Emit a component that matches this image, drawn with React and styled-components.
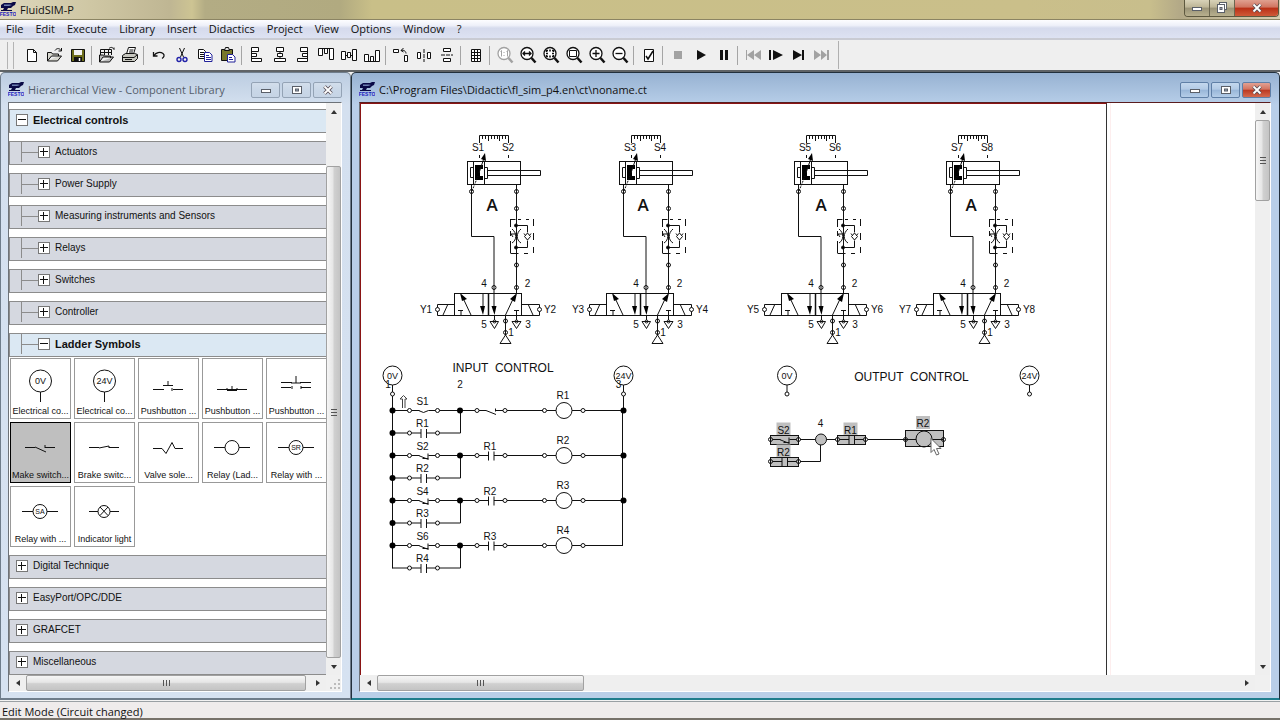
import React from "react";
import styled, { createGlobalStyle, css } from "styled-components";

const uiFont = `"Open Sans", "Noto Sans", sans-serif`;
const libFont = `"Liberation Sans", Arial, sans-serif`;

const GlobalStyle = createGlobalStyle`
  * { box-sizing: border-box; }
  body { margin: 0; background: #eeecec; color: #111; font: 11px/16px ${uiFont}; overflow: hidden; }
  button { font: inherit; color: inherit; padding: 0; margin: 0; border: 0; background: none; }
  svg { display: block; flex: none; }
`;

/* ---------- application frame ---------- */

const Shell = styled.div`
  display: flex;
  flex-direction: column;
  height: 100vh;
`;

const TitleBar = styled.header`
  display: flex;
  justify-content: space-between;
  height: 20px;
  border-bottom: 1px solid #8b8463;
  background: linear-gradient(90deg, #ddd7bd 0, #cfc7a4 90px, #bfb693 170px, #cdc493 192px, #b3ac84 205px, #b1aa80 340px, #c9bf88 372px, #cabf8a 80%, #c8be8c 1150px, #b3a987 1180px, #d6cdb0 100%);
`;

const Brand = styled.h1`
  display: flex;
  align-items: center;
  gap: 4px;
  margin: 0;
  font-size: 11px;
  font-weight: 400;
  line-height: 20px;
`;

const CaptionButtons = styled.div`
  display: flex;
  height: 17px;
  margin-right: 1px;
  border: 1px solid #5d583f;
  border-top: 0;
  border-radius: 0 0 4px 4px;
  overflow: hidden;
`;

const CaptionButton = styled.button`
  display: grid;
  place-items: center;
  width: ${(p) => (p.$close ? 43 : 25)}px;
  border-right: ${(p) => (p.$close ? 0 : 1)}px solid #6b6650;
  background: ${(p) =>
    p.$close
      ? "linear-gradient(#e0a090 0, #d07460 45%, #b92f16 50%, #cf5a38 100%)"
      : "linear-gradient(#d8d2b8 0, #bdb596 45%, #9a9377 50%, #b8b08e 100%)"};
`;

const MenuBar = styled.nav`
  display: flex;
  align-items: center;
  gap: 12px;
  height: 20px;
  padding: 0 6px;
  border-bottom: 2px solid #c9cbd3;
  background: linear-gradient(#fdfdff 0, #eef0f9 30%, #d5daec 45%, #dde2f2 100%);
`;

const MenuItem = styled.button`
  font-size: 11px;
  line-height: 16px;
`;

const Toolbar = styled.div`
  display: flex;
  align-items: center;
  height: 32px;
  padding-left: 7px;
  border-bottom: 2px solid #5f6366;
  background: #efefef;
`;

const Grip = styled.span`
  width: 7px;
  height: 27px;
  margin-right: 6px;
  border: solid #b4b4b4;
  border-width: 0 1px;
`;

const ToolGroup = styled.div`
  display: flex;
  align-items: center;
  & + &::before {
    content: "";
    width: 1px;
    height: 19px;
    margin: 0 3px 0 2px;
    background: #a5a5a5;
  }
`;

const ToolButton = styled.button`
  display: grid;
  place-items: center;
  width: 23px;
  height: 24px;
  color: ${(p) => (p.disabled ? "#a2a2a2" : "#111")};
`;

const ToolEnd = styled.span`
  width: 1px;
  height: 28px;
  margin-left: 5px;
  background: #b0b0b0;
`;

const StatusBar = styled.footer`
  height: 19px;
  padding: 2px 2px 0;
  border-top: 1px solid #9aa0a4;
  border-bottom: 2px solid #77726a;
  background: #efecec;
  line-height: 16px;
`;

/* ---------- child windows ---------- */

const Desktop = styled.main`
  display: flex;
  flex: 1;
  min-height: 0;
  background: #f3f3f3;
  padding-bottom: 1px;
`;

const frameActive = css`
  flex: 1;
  min-width: 0;
  border-color: #22303c;
  border-bottom-color: #1f7d8c;
  background: linear-gradient(#97b2d2 0, #b8cfe9 32px, #b8cfe9 110px, #b9cfe8 100%);
  color: #111;
`;

const frameInactive = css`
  width: 351px;
  flex: none;
  border-color: #6f7d8b;
  background: linear-gradient(#bccde1 0, #d4e0ef 32px, #d6e2f1 100%);
  color: #56606c;
`;

const Window = styled.section`
  display: flex;
  flex-direction: column;
  padding: 0 8px 6px 7px;
  border: solid;
  border-width: 1px 1px 2px;
  border-radius: 5px 5px 0 0;
  ${(p) => (p.$active ? frameActive : frameInactive)}
`;

const WindowTitle = styled.div`
  display: flex;
  align-items: center;
  height: 29px;
  padding-top: 4px;
  gap: 4px;
`;

const WindowName = styled.h2`
  flex: 1;
  margin: 0;
  font-size: 11px;
  font-weight: 400;
  line-height: 20px;
`;

const WindowButtons = styled.div`
  display: flex;
  gap: 2px;
`;

const WindowButton = styled.button`
  display: grid;
  place-items: center;
  width: 29px;
  height: 16px;
  border: 1px solid ${(p) => (p.$active ? "#5f7fa6" : "#94a3b5")};
  border-radius: 2px;
  background: ${(p) =>
    p.$close && p.$active
      ? "linear-gradient(#e2a193 0, #d3735f 45%, #bb3820 50%, #d4694d 100%)"
      : p.$active
        ? "linear-gradient(#c4d8ee 0, #b2cae5 45%, #98b6d8 50%, #b4cde8 100%)"
        : "linear-gradient(#d3deeb 0, #c9d7e7 50%, #c6d4e5 100%)"};
`;

const Client = styled.div`
  display: grid;
  grid-template: minmax(0, 1fr) 16px / minmax(0, 1fr) 15px;
  flex: 1;
  min-height: 0;
  border: 1px solid #fff;
  border-top-color: ${(p) => (p.$active ? "#5a1c1e" : "#6d7278")};
  border-left-color: #6d7278;
  background: #f0f0f0;
`;

/* ---------- scroll bars ---------- */

const Track = styled.div`
  display: flex;
  flex-direction: ${(p) => (p.$vertical ? "column" : "row")};
  background: #efefef;
`;

const ArrowButton = styled.button`
  display: grid;
  place-items: center;
  flex: none;
  width: ${(p) => (p.$vertical ? "auto" : "17px")};
  height: ${(p) => (p.$vertical ? "17px" : "auto")};
`;

const Travel = styled.div`
  display: flex;
  flex: 1;
  flex-direction: inherit;
  padding-top: ${(p) => p.$lead}px;
`;

const Thumb = styled.div`
  display: grid;
  place-items: center;
  flex: 0 0 ${(p) => p.$size};
  border: 1px solid #a1a1a1;
  border-radius: 2px;
  background: linear-gradient(${(p) => (p.$vertical ? "90deg" : "180deg")}, #f6f6f6 0, #e6e6e6 45%, #d0d0d0 55%, #c4c4c4 100%);
`;

/* ---------- component library ---------- */

const Tree = styled.div`
  display: flex;
  flex-direction: column;
  gap: 8px;
  padding-top: 6px;
  overflow: hidden;
  background: #fff;
  font-family: ${libFont};
  color: #111;
`;

const Branch = styled.button`
  display: flex;
  align-items: center;
  flex: none;
  height: 24px;
  padding-left: ${(p) => (p.$nested ? 11 : 6)}px;
  padding-bottom: 2px;
  border: solid #8c8c8c;
  border-width: 1px 0 1px 1px;
  background: ${(p) => (p.$open ? "#dbe8f3" : "#d5d8e0")};
  font-size: ${(p) => (p.$open ? 11 : 10)}px;
  font-weight: ${(p) => (p.$open ? 700 : 400)};
  text-align: left;
`;

const Elbow = styled.span`
  align-self: stretch;
  width: 17px;
  border-left: 1px solid #8c8c8c;
  background: linear-gradient(#8c8c8c, #8c8c8c) 0 10px / 17px 1px no-repeat;
`;

const Expander = styled.span`
  display: grid;
  place-items: center;
  width: 12px;
  height: 12px;
  margin-right: 5px;
  border: 1px solid #777;
  background: #fff;
`;

const OpenBranch = styled.div`
  display: flex;
  flex-direction: column;
  gap: 1px;
  flex: none;
`;

const Palette = styled.div`
  display: grid;
  grid-template-columns: repeat(5, 61px);
  gap: 3px;
  padding-left: 1px;
`;

const Tile = styled.button`
  display: flex;
  flex-direction: column;
  justify-content: space-between;
  align-items: center;
  height: 61px;
  padding-bottom: 1px;
  border: ${(p) => (p.$selected ? "1px solid #000" : "1px solid #999")};
  background: ${(p) => (p.$selected ? "#bfbfbf" : "#fff")};
  font-size: 9px;
  line-height: 12px;
  white-space: nowrap;
  overflow: hidden;
`;

/* ---------- circuit canvas ---------- */

const Canvas = styled.div`
  overflow: hidden;
  background: #fff;
`;

const Paper = styled.div`
  width: 747px;
  min-height: 100%;
  border: 1px solid #333;
  border-top-color: #8a1414;
  border-left-color: #8a1414;
  border-bottom: 0;
  box-shadow: 3px 0 0 #fff, 4px 0 0 #fdeeee;
`;

const Sheet = styled.svg`
  overflow: visible;
  font-family: ${libFont};
  font-size: 10px;
  fill: none;
  stroke: #111;
  text {
    fill: #111;
    stroke: none;
    text-anchor: middle;
    white-space: pre;
  }
`;

/* ---------- small glyphs ---------- */

const FestoLogo = () => (
  <svg width="16" height="15" viewBox="0 0 16 15" aria-hidden="true">
    <path d="M1 3l3-2h7l2-1h3l-1 3-2 1-2 2H8L7 8H3l1-2H1z" fill="#0a0a46" />
    <path d="M4 2.500h6l2 .5-3 1H4z" fill="#6d7fb0" />
    <path d="M1 8.500h11" stroke="#0a0a46" />
    <text x="8" y="14" textAnchor="middle" fontSize="5" fontWeight="700" fill="#1c1cc0" fontFamily="Liberation Sans">FESTO</text>
  </svg>
);

const MinGlyph = () => (
  <svg width="12" height="10" viewBox="0 0 12 10"><rect x="1.500" y="4.500" width="9" height="3" fill="#fff" stroke="#5a5f68" /></svg>
);
const MaxGlyph = () => (
  <svg width="12" height="10" viewBox="0 0 12 10"><rect x="1.500" y="1.500" width="9" height="7" fill="#fff" stroke="#5a5f68" /><rect x="4.500" y="4" width="3" height="2" fill="#9ab" stroke="#5a5f68" /></svg>
);
const RestoreGlyph = () => (
  <svg width="12" height="12" viewBox="0 0 12 12" fill="#fff" stroke="#5a5f68"><rect x="3.500" y=".5" width="7" height="7" /><rect x="1.500" y="2.500" width="7" height="8" /><rect x="4" y="5.500" width="2" height="2" fill="#889" /></svg>
);
const CloseGlyph = () => (
  <svg width="12" height="10" viewBox="0 0 12 10" fill="none"><path d="M2.500 1.500l7 7M9.500 1.500l-7 7" stroke="#5a5058" strokeWidth="3.600" /><path d="M2.500 1.500l7 7M9.500 1.500l-7 7" stroke="#fff" strokeWidth="1.800" /></svg>
);

const triangles = {
  up: "M1 6L4 2L7 6z",
  down: "M1 2L4 6L7 2z",
  left: "M6 1L2 4L6 7z",
  right: "M2 1L6 4L2 7z",
};
const Triangle = ({ dir }) => (
  <svg width="8" height="8" viewBox="0 0 8 8"><path d={triangles[dir]} fill="#333" /></svg>
);

const GripLines = ({ vertical }) => (
  <svg width="8" height="8" viewBox="0 0 8 8"><path d={vertical ? "M1 1.500h6M1 4.500h6M1 7.500h6" : "M1.500 1v6M4.500 1v6M7.500 1v6"} stroke="#555" /></svg>
);

function ScrollBar({ vertical, lead = 0, size }) {
  return (
    <Track $vertical={vertical}>
      <ArrowButton $vertical={vertical} aria-label={vertical ? "Scroll up" : "Scroll left"}><Triangle dir={vertical ? "up" : "left"} /></ArrowButton>
      <Travel $lead={lead}>
        <Thumb $vertical={vertical} $size={size}><GripLines vertical={vertical} /></Thumb>
      </Travel>
      <ArrowButton $vertical={vertical} aria-label={vertical ? "Scroll down" : "Scroll right"}><Triangle dir={vertical ? "down" : "right"} /></ArrowButton>
    </Track>
  );
}

/* ---------- toolbar icons ---------- */

const Lens = ({ children }) => (
  <>
    <circle cx="8" cy="7.500" r="6" fill="#fff" strokeWidth="1.300" />
    <path d="M12.500 12l4 4.500" strokeWidth="2.500" />
    {children}
  </>
);

const openFolder = "M1.500 15V6.500h4l1 1.500h6v2M1.500 15h10l4-5H5.500z";

const icons = {
  New: <path d="M4.500 3.500h6l3 3v9h-9zM10.500 3.500v3h3" fill="#fff" />,
  Open: <><path d={openFolder} fill="#d8d8d0" /><path d="M9 4.500c2-3 5-2 6 0M15.500 2v3h-3" /></>,
  Save: <><path d="M2.500 3.500h13v12h-13z" fill="#6d6d1a" /><path d="M5 4h8v5H5z" fill="#f2f2f2" stroke="none" /><path d="M5 11h8v5H5z" fill="#111" stroke="none" /><path d="M10.500 12v3" stroke="#fff" strokeWidth="1.500" /></>,
  "Open preview": <><path d="M2.500 10V3.500h11V9M2 6.500h12M6.500 3v6M10.500 3v6" fill="none" /><path d="M1.500 16V9h4l1 1h6v2M1.500 16h10l4-5H5z" fill="#bbb" /><path d="M11 2.500c2-2 4-1 5 1v-2" /></>,
  Print: <><path d="M5.500 8l2-6.500h7l-2 6.500" fill="#fff" /><path d="M8.500 4h4M8 6h4" /><path d="M1.500 9.500l3-2h9l3 1v4l-3 3h-12z" fill="#c8c8c0" /><path d="M2 11.500h11l3-2.500M4 13.500h7" /></>,
  Undo: <path d="M3.500 6v4h4M4 9.500c2-3 6-4 9-2 2 1.500 1 4-1 5" strokeWidth="1.300" />,
  Cut: <><path d="M6.500 2l4 9M11.500 2l-4 9" /><g stroke="#2222a8" strokeWidth="1.400"><circle cx="6" cy="13.500" r="2" /><circle cx="12" cy="13.500" r="2" /></g></>,
  Copy: <><path d="M2.500 3.500h5l2 2v7h-7z" fill="#fff" /><path d="M4 6.500h4M4 8.500h4M4 10.500h4" /><path d="M8.500 6.500h5l2.500 2.500v6.500H8.500z" fill="#fff" stroke="#22229a" /><path d="M10 9.500h3M10 11.500h5M10 13.500h5" stroke="#22229a" /></>,
  Paste: <><path d="M2.500 3.500h11v11h-11z" fill="#77772a" /><path d="M5.500 4.500l1-3h3l1 3z" fill="#ddd" /><path d="M8.500 8.500h5l2.500 2.500v5H8.500z" fill="#fff" stroke="#22229a" /><path d="M10 11.500h3M10 13.500h4" stroke="#22229a" /></>,
  "Align left": <path d="M3.500 1.500h7v4h-7zM3.500 7.500h5v3h-5zM3.500 12.500h10v3h-10zM3.500 2v13" fill="#fff" />,
  "Align center": <path d="M5.500 1.500h7v4h-7zM6.500 7.500h5v3h-5zM3.500 12.500h11v3h-11zM9 5v2M9 10v2" fill="#fff" />,
  "Align right": <path d="M6.500 1.500h7v4h-7zM8.500 7.500h5v3h-5zM3.500 12.500h10v3h-10zM13.500 2v13" fill="#fff" />,
  "Align top": <path d="M1.500 2.500h4v7h-4zM7.500 2.500h3v5h-3zM12.500 2.500h4v11h-4zM2 2.500h14" fill="#fff" />,
  "Align middle": <path d="M1.500 5.500h4v8h-4zM7.500 6.500h3v5h-3zM12.500 3.500h4v11h-4zM5 9.500h2M10 9.500h2" fill="#fff" />,
  "Align bottom": <path d="M1.500 8.500h4v7h-4zM7.500 10.500h3v5h-3zM12.500 4.500h4v11h-4zM2 15.500h14" fill="#fff" />,
  Rotate: <><path d="M1.500 3.500h5v3h-5zM12.500 9.500h3v6h-3z" fill="#fff" /><path d="M9 4.500c3-1 5 1 5 3M11.500 2l-2.500 2.500 2.500 1.500" /></>,
  "Mirror horizontally": <><path d="M2.500 6.500h3v6h-3zM12.500 6.500h3v6h-3z" fill="#fff" /><path d="M9 3v13" strokeDasharray="4 1" /></>,
  "Mirror vertically": <><path d="M5.500 2.500h7v3h-7zM5.500 12.500h7v3h-7z" fill="#fff" /><path d="M3 9h12" strokeDasharray="4 1" /></>,
  Grid: <path d="M4.500 3.500h9v12h-9zM7.500 3v13M10.500 3v13M4 6.500h10M4 9.500h10M4 12.500h10" fill="#fff" />,
  "Original size": <Lens><path d="M4.500 5.500l1-1v6M10.500 5.500l1-1v6M8 6v1M8 9v1" /></Lens>,
  "Fit width": <Lens><path d="M3.500 7.500h9M6 5.500l-2 2 2 2M10 5.500l2 2-2 2" strokeWidth="1.300" /></Lens>,
  "Fit page": <Lens><path d="M4.500 6V4.500H6M10 4.500h1.500V6M11.500 9v1.500H10M6 10.500H4.500V9M8 3.500v2M8 9.500v2M4 7.500h2M10 7.500h2" strokeWidth="1.600" /></Lens>,
  "Zoom to selection": <Lens><path d="M4.500 4.500h7v6h-7z" /></Lens>,
  "Zoom in": <Lens><path d="M4.500 7.500h7M8 4v7" strokeWidth="1.300" /></Lens>,
  "Zoom out": <Lens><path d="M4.500 7.500h7" strokeWidth="1.300" /></Lens>,
  Check: <><path d="M4.500 3.500h9v12h-9z" fill="#fff" /><path d="M6 10l2 3 5-8" strokeWidth="1.500" /></>,
  Stop: <path d="M5 5h8v8H5z" fill="currentColor" stroke="none" />,
  Start: <path d="M5 4l9 5-9 5z" fill="currentColor" stroke="none" />,
  Pause: <path d="M5 4h3v10H5zM10 4h3v10h-3z" fill="currentColor" stroke="none" />,
  Reset: <path d="M2 4h1v10H2zM10 4v10L3 9zM17 4v10l-7-5z" fill="currentColor" stroke="none" />,
  "Single step": <path d="M2 4h2v10H2zM6 4l10 5-10 5z" fill="currentColor" stroke="none" />,
  "Until state change": <path d="M3 4l9 5-9 5zM12 4h2v10h-2z" fill="currentColor" stroke="none" />,
  "Next topic": <path d="M1 4l7 5-7 5zM8 4l6 5-6 5zM14 4h2v10h-2z" fill="currentColor" stroke="none" />,
};

const disabledTools = new Set(["Original size", "Stop", "Reset", "Next topic"]);

const toolGroups = [
  ["New", "Open", "Save"],
  ["Open preview", "Print"],
  ["Undo", "Cut", "Copy", "Paste"],
  ["Align left", "Align center", "Align right", "Align top", "Align middle", "Align bottom"],
  ["Rotate", "Mirror horizontally", "Mirror vertically"],
  ["Grid"],
  ["Original size", "Fit width", "Fit page", "Zoom to selection", "Zoom in", "Zoom out"],
  ["Check"],
  ["Stop", "Start", "Pause"],
  ["Reset", "Single step", "Until state change", "Next topic"],
];

const menus = ["File", "Edit", "Execute", "Library", "Insert", "Didactics", "Project", "View", "Options", "Window", "?"];

/* ---------- library data ---------- */

const Potential = ({ label }) => (
  <><circle cx="30.500" cy="22" r="11" /><path d="M30.500 33v10" /><text x="30.500" y="25" fontSize="9">{label}</text></>
);
const RelaySymbol = ({ label, r = 7 }) => (
  <><path d={`M12 24.500h${18 - r}M${30 + r} 24.500h${18 - r}`} /><circle cx="30" cy="24.500" r={r} />{label && <text x="30" y="27" fontSize="7">{label}</text>}</>
);

const palette = [
  ["Electrical co...", <Potential label="0V" />],
  ["Electrical co...", <Potential label="24V" />],
  ["Pushbutton ...", <path d="M15 30.500h10M35 30.500h10M25 26.500h10M30 22v5M26 30l-1 1M34 29v3" />],
  ["Pushbutton ...", <path d="M15 30.500h30M25 31.500h10M30 27v4M25 29v2M35 29v2" />],
  ["Pushbutton ...", <path d="M15 23.500h11M34 23.500h11M25 24h10M30 17v7M15 28.500h10M35 28.500h10M26 27v3M35 27v3" />],
  ["Make switch...", <path d="M15 24.500h10M35 24.500h10M25 24l11 5M35 22v3" />],
  ["Brake switc...", <path d="M15 24.500h10M35 24.500h10M25 25l10-2M35 23v2" />],
  ["Valve sole...", <path d="M15 25.500h9l4 5 6-11 3 6h8" />],
  ["Relay (Lad...", <RelaySymbol />],
  ["Relay with ...", <RelaySymbol label="SR" />],
  ["Relay with ...", <RelaySymbol label="SA" />],
  ["Indicator light", <path d="M15 24.500h9M36 24.500h9M24 24.500a6 6 0 1 0 12 0a6 6 0 1 0-12 0M26 20l8 8.500M34 20l-8 8.500" />],
];

const nestedBranches = ["Actuators", "Power Supply", "Measuring instruments and Sensors", "Relays", "Switches", "Controller"];
const closedBranches = ["Digital Technique", "EasyPort/OPC/DDE", "GRAFCET", "Miscellaneous"];

function TreeRow({ label, open, nested }) {
  return (
    <Branch $open={open} $nested={nested} aria-expanded={Boolean(open)}>
      {nested && <Elbow />}
      <Expander>
        <svg width="10" height="10" viewBox="0 0 10 10"><path d={open ? "M1 4.500h8" : "M1 4.500h8M4.500 1v8"} stroke="#111" /></svg>
      </Expander>
      {label}
    </Branch>
  );
}

/* ---------- circuit symbols ---------- */

const Port = ({ x, y }) => <circle cx={x} cy={y} r="2" />;
const Dot = ({ x, y }) => <circle cx={x} cy={y} r="3" fill="#000" stroke="none" />;

function Cylinder({ dx, n, labelX }) {
  return (
    <g transform={`translate(${dx} 0)`}>
      <path d="M479.500 143v-7.500h29v7.500M482.500 136v3M485.500 136v3M488.500 136v5M491.500 136v3M494.500 136v3M497.500 136v3M499.500 136v5M502.500 136v3M505.500 136v3M479.500 155v3M508.500 155v3" />
      <text x="478" y="151">S{n}</text>
      <text x="508" y="151">S{n + 1}</text>
      <rect x="467.500" y="161.500" width="53" height="23" />
      <path d="M473.500 161v23M484.500 161v23M470.500 167.500h3v10h-3zM484.500 167.500h3v11h-3zM487.500 170.500h53v5h-53z" />
      <path d="M475 165h8v4h-3v7h3v4h-8z" fill="#000" stroke="none" />
      <path d="M479 173l5-15" />
      <path d="M472 191l6-15" strokeDasharray="2 1" />
      <path d="M485 153l1 8-5-2z" fill="#000" stroke="none" />
      <path d="M471.500 184.500v52h22.500V293M516.500 184.500V293" />
      <Port x={471.5} y={191.5} /><Port x={516.5} y={191.5} /><Port x={516.5} y={208.5} />
      <Port x={516.5} y={265} /><Port x={494} y={287.5} /><Port x={516.5} y={287.5} />
      <text x={labelX} y="211" fontSize="17" fontWeight="600" fontFamily="Open Sans">A</text>
      <path d="M510.500 219.500h5M518 219.500h3M526 219.500h3M533.500 219v7M533.500 233v7M533.500 247v6M510.500 219v8M510.500 231v5M510.500 241v12M510.500 253.500h8M524 253.500h4" />
      <path d="M516.500 225.500h11v7M516.500 247.500h11v-7" />
      <circle cx="516" cy="225.500" r="1.500" fill="#000" /><circle cx="516" cy="247.500" r="1.500" fill="#000" />
      <path d="M527.500 233l3 3.500-3 3.500-3-3.500zM524 233.500l1.500 2M531 233.500l-1.500 2M512 229c5 4 5 11 0 14M521 229c-5 4-5 11 0 14M511 234h5M511 234l2 3" />
      <text x="484" y="287">4</text>
      <text x="527.500" y="287">2</text>
      <rect x="454.500" y="293.500" width="67" height="22" />
      <path d="M488.500 293v23" strokeWidth="1.500" />
      <path d="M471 315l-8-17M483 293v18M494 293v18M505.500 315l8-17M461 316v-5.500M458 310.500h5M516.500 316v-5.500M514 310.500h5" />
      <path d="M460 293l7 6-5 2zM480 306h5l-2 9zM491.500 306h5l-2 9zM517 293l-2 9-5-3z" fill="#000" stroke="none" />
      <path d="M454.500 304.500h-17v11h17M521.500 304.500h18v11h-18M443 315l5-11M528 304l5 11" />
      <g fill="#fff"><Port x={437.5} y={309.5} /><Port x={539.5} y={309.5} /></g>
      <text x="426" y="313">Y{n}</text>
      <text x="550" y="313">Y{n + 1}</text>
      <path d="M494.500 316v4M516.500 316v4M490 321.500h8.500l-4 7zM512 321.500h9l-4.500 7z" />
      <circle cx="494.500" cy="321.500" r="1.500" /><circle cx="516.500" cy="321.500" r="1.500" />
      <text x="484" y="328">5</text>
      <text x="528" y="328">3</text>
      <path d="M505.500 316v19M505.500 335l-5.500 8.500h11z" />
      <Port x={505.5} y={321} /><Port x={505.5} y={332.5} />
      <text x="511" y="336">1</text>
    </g>
  );
}

const Supply = ({ x, label }) => (
  <>
    <circle cx={x} cy="375.500" r="9.500" />
    <text x={x} y="379" fontSize="9">{label}</text>
    <path d={`M${x} 385v7`} />
    <Port x={x} y={394} />
  </>
);

/* A contact spans 28 px between its two ports; the kind picks what is drawn in the middle. */
function Contact({ x, y, label, kind = "relay" }) {
  const middle = {
    relay: `M${x + 2} ${y}h9.500M${x + 17} ${y}h9M${x + 11.500} ${y - 4}v9M${x + 17} ${y - 4}v9`,
    make: `M${x + 2} ${y}h7M${x + 19} ${y}h7M${x + 9} ${y}l10 4M${x + 18.500} ${y - 2}v3`,
    brake: `M${x + 2} ${y}h8M${x + 19} ${y}h7M${x + 9} ${y}l5 2 5-2`,
    sensor: `M${x + 2} ${y}h8M${x + 19} ${y}h7M${x + 9} ${y}l10 4M${x + 13} ${y + 3}h6M${x + 18.500} ${y - 2}v5`,
  }[kind];
  return (
    <>
      <Port x={x} y={y} /><Port x={x + 28} y={y} />
      <path d={middle} />
      {label && <text x={x + 13} y={y - 6}>{label}</text>}
    </>
  );
}

function Rung({ y, sensor, relay, latch, coil, last }) {
  return (
    <>
      <path d={`M392.500 ${y}h15M439.500 ${y}h35.500M507 ${y}h36M547 ${y}h9M572 ${y}h9M585 ${y}h38M392.500 ${y + 22.500}h15M439.500 ${y + 22.500}h21V${y}`} />
      <Dot x={392.5} y={y} /><Dot x={460} y={y} />
      {!last && <><Dot x={392.5} y={y + 22.5} /><Dot x={623.5} y={y} /></>}
      <Contact x={409.5} y={y} label={sensor} kind={sensor === "S1" ? "brake" : "sensor"} />
      <Contact x={409.5} y={y + 22.5} label={latch} />
      <Contact x={477} y={y} label={relay} kind={relay ? "relay" : "make"} />
      <Port x={544.5} y={y} /><circle cx="564" cy={y} r="8" /><Port x={583} y={y} />
      <text x="563" y={y - 12}>{coil}</text>
    </>
  );
}

function SelectedContact({ x, y, label, kind }) {
  return (
    <>
      <rect x={x + 6} y={y - 17} width="14" height="13" fill="#bfbfbf" stroke="none" />
      <rect x={x} y={y - 4} width="28" height="9" fill="#bfbfbf" />
      <Contact x={x} y={y} label={label} kind={kind} />
    </>
  );
}

function Circuit() {
  return (
    <Sheet width="740" height="560" viewBox="361 104 740 560" role="img" aria-label="Circuit diagram">
      <Cylinder dx={0} n={1} labelX={492} />
      <Cylinder dx={152} n={3} labelX={491} />
      <Cylinder dx={327} n={5} labelX={494} />
      <Cylinder dx={479} n={7} labelX={492} />

      <text x="503" y="372" fontSize="12">INPUT  CONTROL</text>
      <Supply x={392.5} label="0V" />
      <Supply x={623.5} label="24V" />
      <text x="388" y="388">1</text>
      <text x="460" y="388">2</text>
      <text x="618.500" y="388">3</text>
      <path d="M392.500 396v172.500M623.500 396v15M622.500 411v135" />
      <path d="M402.500 408v-9h-2.500l3.500-3.500 3.500 3.500h-2v9" stroke="#444" />
      <Rung y={410.5} sensor="S1" latch="R1" coil="R1" />
      <Rung y={455.5} sensor="S2" relay="R1" latch="R2" coil="R2" />
      <Rung y={500.5} sensor="S4" relay="R2" latch="R3" coil="R3" />
      <Rung y={545.5} sensor="S6" relay="R3" latch="R4" coil="R4" last />

      <text x="911.500" y="381" fontSize="12">OUTPUT  CONTROL</text>
      <Supply x={787} label="0V" />
      <Supply x={1029.5} label="24V" />
      <SelectedContact x={770.5} y={439.5} label="S2" kind="sensor" />
      <SelectedContact x={770.5} y={461.5} label="R2" />
      <SelectedContact x={837.5} y={439.5} label="R1" />
      <path d="M800 439.500h36M868 439.500h38M800 461.500h20.500v-22" />
      <circle cx="821" cy="439.500" r="5.500" fill="#bfbfbf" />
      <text x="820.500" y="427">4</text>
      <rect x="916" y="416" width="14" height="13" fill="#bfbfbf" stroke="none" />
      <rect x="905.500" y="430.500" width="38" height="16" fill="#bfbfbf" />
      <circle cx="924" cy="439" r="8" />
      <path d="M906 439.500h10M932 439.500h11" />
      <Port x={905.5} y={439.5} /><Port x={943.5} y={439.5} />
      <text x="923" y="427">R2</text>
      <path d="M931 438.500v14l3-3 2.500 5.500 2.500-1-2.500-5.500h4.500z" fill="#fff" stroke="#666" />
    </Sheet>
  );
}

function ChildWindow({ title, active, children }) {
  return (
    <Window $active={active}>
      <WindowTitle>
        <FestoLogo />
        <WindowName>{title}</WindowName>
        <WindowButtons>
          <WindowButton $active={active} aria-label="Minimize"><MinGlyph /></WindowButton>
          <WindowButton $active={active} aria-label="Maximize"><MaxGlyph /></WindowButton>
          <WindowButton $active={active} $close aria-label="Close"><CloseGlyph /></WindowButton>
        </WindowButtons>
      </WindowTitle>
      <Client $active={active}>{children}</Client>
    </Window>
  );
}

const SizeGrip = () => (
  <svg width="15" height="16" viewBox="0 0 15 16"><path d="M12 4h2v2h-2zM12 8h2v2h-2zM8 8h2v2H8zM12 12h2v2h-2zM8 12h2v2H8zM4 12h2v2H4z" fill="#bcbcbc" /></svg>
);

export default function App() {
  return (
    <Shell>
      <GlobalStyle />
      <TitleBar>
        <Brand><FestoLogo />FluidSIM-P</Brand>
        <CaptionButtons>
          <CaptionButton aria-label="Minimize"><MinGlyph /></CaptionButton>
          <CaptionButton aria-label="Restore"><RestoreGlyph /></CaptionButton>
          <CaptionButton $close aria-label="Close"><CloseGlyph /></CaptionButton>
        </CaptionButtons>
      </TitleBar>
      <MenuBar>{menus.map((m) => <MenuItem key={m}>{m}</MenuItem>)}</MenuBar>
      <Toolbar>
        <Grip />
        {toolGroups.map((group) => (
          <ToolGroup key={group[0]}>
            {group.map((name) => (
              <ToolButton key={name} aria-label={name} disabled={disabledTools.has(name)}>
                <svg width="18" height="18" viewBox="0 0 18 18" fill="none" stroke="currentColor">{icons[name]}</svg>
              </ToolButton>
            ))}
          </ToolGroup>
        ))}
        <ToolEnd />
      </Toolbar>
      <Desktop>
        <ChildWindow title="Hierarchical View - Component Library">
          <Tree>
            <TreeRow label="Electrical controls" open />
            {nestedBranches.map((b) => <TreeRow key={b} label={b} nested />)}
            <OpenBranch>
              <TreeRow label="Ladder Symbols" open nested />
              <Palette>
                {palette.map(([caption, symbol], i) => (
                  <Tile key={i} $selected={i === 5}>
                    <Sheet as="svg" width="59" height="46" viewBox="1 0 59 46">{symbol}</Sheet>
                    {caption}
                  </Tile>
                ))}
              </Palette>
            </OpenBranch>
            {closedBranches.map((b) => <TreeRow key={b} label={b} />)}
          </Tree>
          <ScrollBar vertical lead={46} size="100%" />
          <ScrollBar size="99%" />
          <SizeGrip />
        </ChildWindow>
        <ChildWindow title="C:\Program Files\Didactic\fl_sim_p4.en\ct\noname.ct" active>
          <Canvas><Paper><Circuit /></Paper></Canvas>
          <ScrollBar vertical size="15%" />
          <ScrollBar size="24%" />
        </ChildWindow>
      </Desktop>
      <StatusBar>Edit Mode (Circuit changed)</StatusBar>
    </Shell>
  );
}
